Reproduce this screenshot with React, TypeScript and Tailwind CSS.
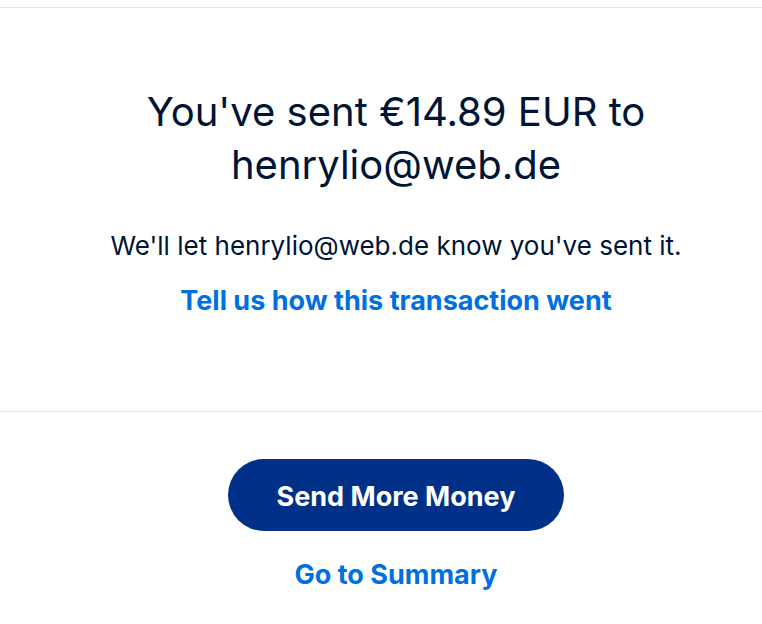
import React from 'react';

export default function App() {
  return (
    <div className="w-[762px] h-[624px] overflow-hidden bg-white" style={{ fontFamily: 'Inter, "Liberation Sans", sans-serif' }}>
      <div className="w-[792px] mt-[7px] border-t border-[#e6e6e6]">
        {/* Confirmation */}
        <div className="h-[403px] flex flex-col items-center pt-[77px] text-center">
          <h1 className="text-[40px] leading-[53px] text-[#001435] font-normal w-[580px]">
            You've sent €14.89 EUR to henrylio@web.de
          </h1>
          <p className="mt-[40px] text-[26px] leading-[30px] text-[#001435]">
            We'll let henrylio@web.de know you've sent it.
          </p>
          <a href="#" className="mt-[25px] text-[27px] leading-[30px] font-bold text-[#0070e0]">
            Tell us how this transaction went
          </a>
        </div>

        {/* Actions */}
        <div className="border-t border-[#e6e6e6] flex flex-col items-center pt-[47px]">
          <button className="w-[336px] h-[72px] pt-[4px] rounded-full bg-[#003087] text-white text-[27px] font-bold">
            Send More Money
          </button>
          <a href="#" className="mt-[28px] text-[27px] leading-[32px] font-bold text-[#0070e0]">
            Go to Summary
          </a>
        </div>
      </div>
    </div>
  );
}
